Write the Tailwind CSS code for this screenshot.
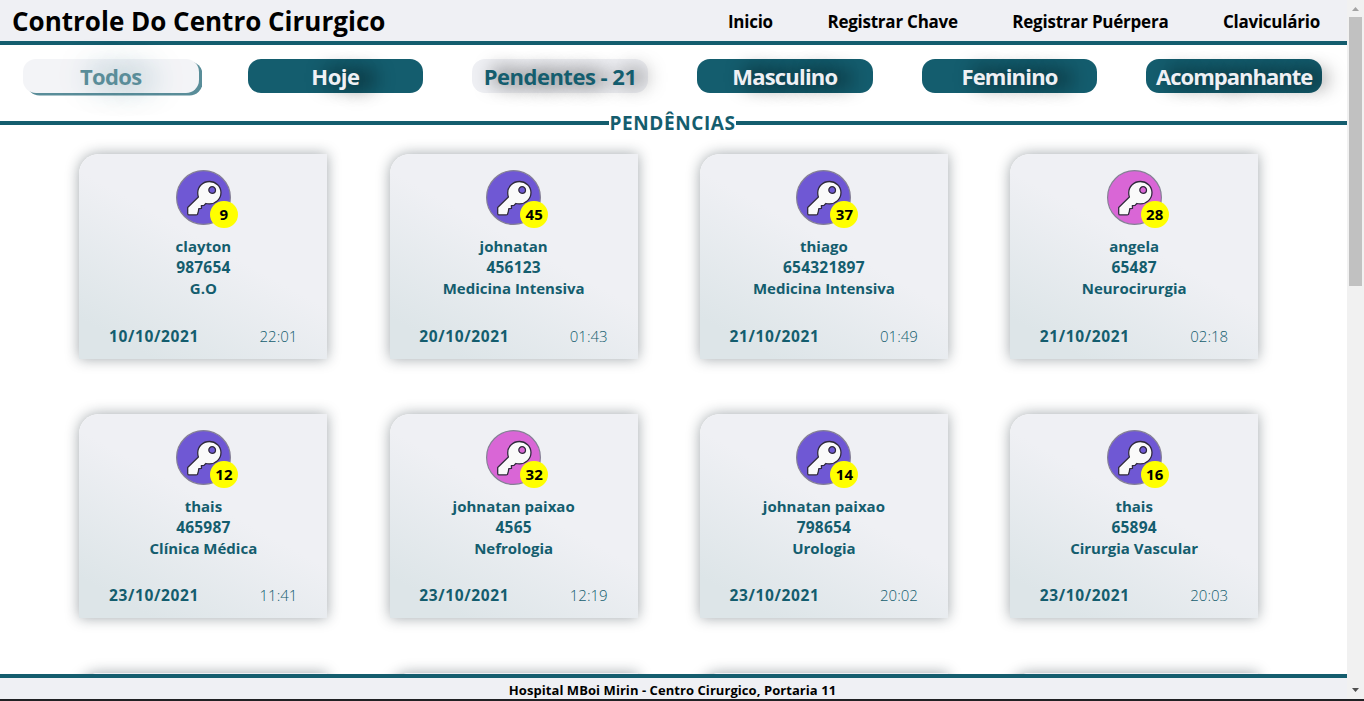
<!DOCTYPE html>
<html lang="pt-BR">
<head>
<meta charset="utf-8">
<title>Controle Do Centro Cirurgico</title>
<script src="https://cdn.jsdelivr.net/npm/@tailwindcss/browser@4"></script>
</head>
<body class="h-[701px] overflow-hidden bg-white font-['Open_Sans','Noto_Sans',sans-serif] text-[#145d6e]">
<svg class="hidden">
  <symbol id="key" viewBox="0 0 56 56">
    <circle cx="28" cy="28" r="27.400" fill="currentColor" stroke="#858095" stroke-width="1.2"/>
    <path fill-rule="evenodd" d="M34 11.700c6.500 0 11.800 5 11.800 11.300 0 6.500-5.300 11.500-11.800 11.500-1.400 0-2.500-.1-3.600-.4L28.500 36l-2.700.3.200 2.800-2.800.3-.4 2.700-1 3.200-1.300.5h-7c-1 0-1.600-.6-1.600-1.600v-6L22.800 27.500c-.5-1.300-.7-2.700-.7-4.300 0-6.500 5.400-11.500 11.900-11.500zm2.800 5.300a3.400 3.400 0 1 0 .01 6.800 3.400 3.400 0 0 0 0-6.800z" fill="#fafafa" stroke="#302a3c" stroke-width="1.300" stroke-linejoin="round"/>
  </symbol>
</svg>
<div class="flex h-[699px]">
  <div class="flex w-[1347px] shrink-0 flex-col">
    <header class="flex h-[45px] shrink-0 items-center border-b-4 border-[#145d6e] bg-[#eff0f4] pl-3 pr-[27px] font-bold text-black">
      <h1 class="mr-auto whitespace-nowrap text-[26px] leading-none"><span>Controle Do Centro Cirurgico</span></h1>
      <nav class="flex gap-[54.500px] whitespace-nowrap pt-[3px] text-[17px] tracking-[-0.240px]"><a>Inicio</a><a>Registrar Chave</a><a>Registrar Puérpera</a><a>Claviculário</a></nav>
    </header>
    <div class="flex shrink-0 justify-between pl-[23px] pr-[25px] pt-[14px] text-[22px] font-bold leading-[34px] text-[#eff0f4]">
      <button class="h-[34px] w-[175.500px] rounded-[13px] bg-[#eff0f4] tracking-[-0.700px] text-[#145d6e] opacity-70 shadow-[3.500px_2.500px_0_#145d6e] [text-shadow:10px_0_30px_#145d6e]"><span>Todos</span></button>
      <button class="h-[34px] w-[175.500px] rounded-[13px] bg-[#145d6e] tracking-[-0.500px] [text-shadow:15px_0_20px_#000]"><span>Hoje</span></button>
      <button class="h-[34px] w-[175.500px] whitespace-nowrap rounded-[13px] bg-[#eff0f4] tracking-[-0.500px] text-[#145d6e] [text-shadow:10px_0_20px_#000]"><span>Pendentes - 21</span></button>
      <button class="h-[34px] w-[175.500px] rounded-[13px] bg-[#145d6e] tracking-[-0.800px] [text-shadow:13px_0_20px_#000]"><span>Masculino</span></button>
      <button class="h-[34px] w-[175.500px] rounded-[13px] bg-[#145d6e] tracking-[-0.800px] [text-shadow:13px_0_20px_#000]"><span>Feminino</span></button>
      <button class="h-[34px] w-[175.500px] rounded-[13px] bg-[#145d6e] tracking-[-1px] [text-shadow:13px_0_20px_#000]"><span>Acompanhante</span></button>
    </div>
    <div class="mt-[18px] flex h-6 shrink-0 items-center">
      <div class="h-1 w-[609px] bg-[#145d6e]"></div>
      <h2 class="w-[127px] whitespace-nowrap text-center text-[19px] font-bold leading-6 tracking-[0.600px]">PENDÊNCIAS</h2>
      <div class="h-1 flex-1 bg-[#145d6e]"></div>
    </div>
    <main class="min-h-0 flex-1 overflow-hidden pl-[79.400px] pt-[19px]">
      <div id="cards" class="grid grid-cols-[repeat(4,248px)] gap-x-[62.250px] gap-y-[55px]"></div>
    </main>
    <footer class="h-[25px] shrink-0 border-t-4 border-[#145d6e] bg-[#eff0f4] pr-[2px] text-center text-[13px] font-bold leading-6 tracking-[0.060px] text-black"><span>Hospital MBoi Mirin - Centro Cirurgico, Portaria 11</span></footer>
  </div>
  <aside class="flex flex-1 flex-col items-center bg-[#f1f1f1]">
    <svg class="h-[17px] w-[17px]" viewBox="0 0 17 17"><path d="M5 11h7L8.500 7z" fill="#a3a3a3"/></svg>
    <div class="h-[269px] w-[13px] bg-[#c1c1c1]"></div>
    <svg class="mt-auto h-[17px] w-[17px]" viewBox="0 0 17 17"><path d="M5 6h7L8.500 10z" fill="#505050"/></svg>
  </aside>
</div>
<div class="h-[2px] bg-[#202124]"></div>
<script>
const cards = [
  [9,'clayton','987654','G.O','10/10/2021','22:01'],
  [45,'johnatan','456123','Medicina Intensiva','20/10/2021','01:43'],
  [37,'thiago','654321897','Medicina Intensiva','21/10/2021','01:49'],
  [28,'angela','65487','Neurocirurgia','21/10/2021','02:18',1],
  [12,'thais','465987','Clínica Médica','23/10/2021','11:41'],
  [32,'johnatan paixao','4565','Nefrologia','23/10/2021','12:19',1],
  [14,'johnatan paixao','798654','Urologia','23/10/2021','20:02'],
  [16,'thais','65894','Cirurgia Vascular','23/10/2021','20:03'],
  null, null, null, null
];
document.getElementById('cards').innerHTML = cards.map(c => `
<article class="flex h-[204.670px] flex-col items-center rounded-tl-[20px] bg-[linear-gradient(209deg,#eff0f4_45%,#dde5e8_88%)] pt-4 shadow-[0_0_14px_#14232e66]">${c ? `
  <div class="relative h-[55px] w-[55px] ${c[6] ? 'text-[#d966d6]' : 'text-[#6f58d4]'}">
    <svg class="h-full w-full"><use href="#key"/></svg>
    <span class="absolute left-[34px] top-[31px] flex h-[27px] w-7 items-center justify-center rounded-full bg-[#ff0] text-[15px] font-bold text-black">${c[0]}</span>
  </div>
  <div class="mt-[11px] text-center text-[15px] font-bold leading-[21px]"><p><span>${c[1]}</span></p><p class="text-[15.500px] tracking-[0.220px]"><span>${c[2]}</span></p><p><span>${c[3]}</span></p></div>
  <div class="mt-[26.700px] flex w-full justify-between pl-[29.500px] pr-[30px] text-[15px] leading-[21px]"><b class="text-[15.500px] font-bold tracking-[0.630px]">${c[4]}</b><span class="font-[350]">${c[5]}</span></div>` : ''}
</article>`).join('');
</script>
</body>
</html>
